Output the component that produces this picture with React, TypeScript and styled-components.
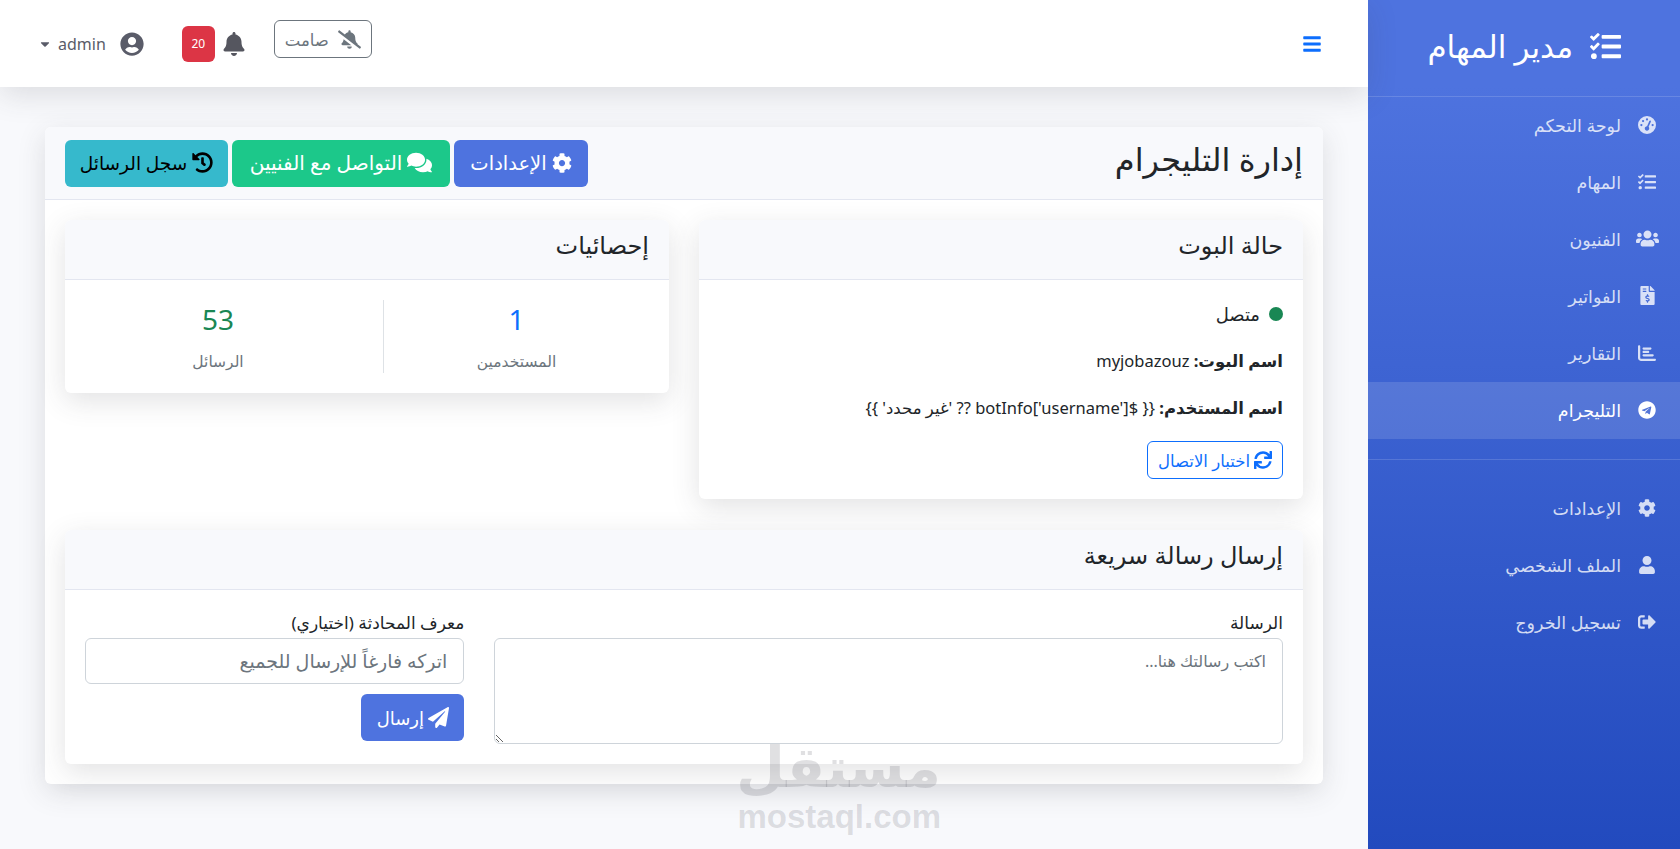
import React from "react";
import styled, { createGlobalStyle } from "styled-components";
import {
  FaBars, FaBell, FaBellSlash, FaCog, FaComments, FaFileInvoiceDollar, FaHistory,
  FaPaperPlane, FaSignOutAlt, FaSync, FaTasks, FaTelegram, FaUser, FaUserCircle, FaUsers, FaCaretDown,
} from "react-icons/fa";
import { FaChartBar, FaGaugeHigh } from "react-icons/fa6";

const Global = createGlobalStyle`
  html, body { margin: 0; padding: 0; height: 100%; overflow: hidden; }
  body { font-family: "Noto Sans", "DejaVu Sans", sans-serif; background: #f8f9fc; color: #212529; }
  * { box-sizing: border-box; }
`;

const Page = styled.div`
  position: relative;
  display: flex;
  height: 849px;
  overflow: hidden;
`;
const Sidebar = styled.aside`
  width: 312px;
  flex: none;
  background: linear-gradient(180deg, #4e73df 10%, #224abe 100%);
  color: #fff;
`;
const Brand = styled.div`
  height: 97px;
  padding: 0 59px 4px 0;
  display: flex;
  align-items: center;
  gap: 17px;
  border-bottom: 1px solid rgba(255, 255, 255, 0.15);
  font-size: 31px;
  svg { font-size: 31px; flex: none; }
`;
const Nav = styled.nav`
  display: flex;
  flex-direction: column;
`;
const NavItem = styled.a<{ $active?: boolean }>`
  height: 57px;
  display: flex;
  align-items: center;
  padding: 0 21px 2px 0;
  font-size: 17.5px;
  color: ${(p) => (p.$active ? "#fff" : "rgba(255,255,255,.8)")};
  background: ${(p) => (p.$active ? "rgba(255,255,255,.13)" : "transparent")};
`;
const NavIcon = styled.span`
  width: 24px;
  margin-left: 14px;
  display: flex;
  justify-content: center;
  font-size: 18px;
`;
const Divider = styled.hr`
  margin: 20px 0;
  border: 0;
  border-top: 1px solid rgba(255, 255, 255, 0.15);
`;
const Main = styled.main`
  flex: 1;
  min-width: 0;
`;
const Topbar = styled.header`
  height: 87px;
  padding: 0 46px 0 38px;
  background: #fff;
  display: flex;
  align-items: center;
  justify-content: space-between;
  box-shadow: 0 8px 30px rgba(58, 59, 69, 0.15);
`;
const Burger = styled.span`
  color: #0d6efd;
  font-size: 20px;
  display: flex;
`;
const TopTools = styled.div`
  display: flex;
  align-items: center;
  color: #5a5c69;
`;
const MuteButton = styled.button`
  width: 98px;
  height: 38px;
  margin: 0 0 9px 28px;
  display: flex;
  align-items: center;
  justify-content: center;
  gap: 9px;
  background: #fff;
  border: 1px solid #6c757d;
  border-radius: 6px;
  color: #6c757d;
  font: inherit;
  font-size: 16.5px;
  svg { font-size: 23px; flex: none; }
`;
const BellGroup = styled.div`
  display: flex;
  align-items: center;
  gap: 7px;
  margin-left: 38px;
  svg { font-size: 24px; color: #55565f; }
`;
const Badge = styled.span`
  width: 33px;
  height: 36px;
  border-radius: 6px;
  background: #dc3545;
  color: #fff;
  font-size: 12px;
  display: flex;
  align-items: center;
  justify-content: center;
`;
const UserMenu = styled.div`
  display: flex;
  align-items: center;
  gap: 14px;
  font-size: 16px;
  color: #5a5c69;
  svg:first-child { font-size: 24px; }
`;
const Caret = styled(FaCaretDown)`
  font-size: 14px;
  margin-right: -8px;
`;
const Content = styled.div`
  padding: 40px 45px 0;
`;
const Card = styled.section`
  background: #fff;
  border-radius: 6px;
  box-shadow: 0 8px 28px rgba(58, 59, 69, 0.15);
`;
const MainHeader = styled.div`
  height: 73px;
  padding: 0 20px;
  display: flex;
  align-items: center;
  justify-content: space-between;
  background: #f8f9fc;
  border-bottom: 1px solid #e3e6f0;
  border-radius: 6px 6px 0 0;
`;
const Title = styled.h1`
  margin: 0 0 10px;
  font-size: 32px;
  font-weight: 400;
`;
const Actions = styled.div`
  display: flex;
  gap: 4px;
`;
const ActionButton = styled.button<{ $bg: string; $fg: string; $w: number; $size: number }>`
  width: ${(p) => p.$w}px;
  height: 47px;
  padding-bottom: 2px;
  display: flex;
  align-items: center;
  justify-content: center;
  gap: 5px;
  border: 0;
  border-radius: 6px;
  background: ${(p) => p.$bg};
  color: ${(p) => p.$fg};
  font: inherit;
  font-size: ${(p) => p.$size}px;
  svg { flex: none; }
`;
const MainBody = styled.div`
  padding: 20px 20px 20px;
  display: flex;
  flex-direction: column;
  gap: 31px;
`;
const TwoCols = styled.div`
  display: grid;
  grid-template-columns: 1fr 1fr;
  gap: 30px;
  align-items: start;
`;
const CardHeader = styled.div`
  height: 60px;
  padding: 0 20px 11px;
  display: flex;
  align-items: center;
  background: #f8f9fc;
  border-bottom: 1px solid #e3e6f0;
  border-radius: 6px 6px 0 0;
`;
const CardTitle = styled.h5`
  margin: 0;
  font-size: 24px;
  font-weight: 400;
`;
const StatusBody = styled.div`
  height: 219px;
  padding: 0 20px;
  display: flex;
  flex-direction: column;
  align-items: flex-start;
`;
const StatusRow = styled.div`
  display: flex;
  align-items: center;
  gap: 9px;
  height: 24px;
  margin-top: 22px;
  font-size: 18px;
`;
const Dot = styled.span`
  width: 14px;
  height: 14px;
  border-radius: 50%;
  background: #198754;
`;
const InfoLine = styled.p<{ $top: number }>`
  margin: ${(p) => p.$top}px 0 0;
  height: 24px;
  line-height: 24px;
  font-size: 16.5px;
  white-space: nowrap;
  b { font-weight: 700; }
`;
const OutlineButton = styled.button`
  margin-top: 21px;
  width: 136px;
  height: 38px;
  display: flex;
  align-items: center;
  justify-content: center;
  gap: 4px;
  background: #fff;
  color: #0d6efd;
  border: 1px solid #0d6efd;
  border-radius: 6px;
  font: inherit;
  font-size: 16.5px;
  white-space: nowrap;
  svg { font-size: 18px; flex: none; }
`;
const StatsBody = styled.div`
  height: 113px;
  padding: 20px;
  display: grid;
  grid-template-columns: 1fr 1fr;
  gap: 32px;
`;
const Stat = styled.div<{ $line?: boolean }>`
  text-align: center;
  border-left: ${(p) => (p.$line ? "1px solid #dee2e6" : "0")};
`;
const StatValue = styled.div<{ $color: string }>`
  height: 38px;
  line-height: 38px;
  font-size: 28px;
  color: ${(p) => p.$color};
`;
const StatLabel = styled.div`
  margin-top: 12px;
  font-size: 15.5px;
  color: #6c757d;
`;
const FormBody = styled.form`
  padding: 21px 20px 20px;
  display: grid;
  grid-template-columns: repeat(12, 1fr);
  gap: 30px;
`;
const Field = styled.div<{ $span: number }>`
  grid-column: span ${(p) => p.$span};
  display: flex;
  flex-direction: column;
  align-items: flex-start;
`;
const Label = styled.label`
  height: 27px;
  line-height: 24px;
  font-size: 17px;
  white-space: nowrap;
`;
const MessageArea = styled.textarea`
  width: 100%;
  height: 106px;
  padding: 11px 16px;
  border: 1px solid #ced4da;
  border-radius: 6px;
  font: inherit;
  font-size: 16px;
  &::placeholder { color: #6c757d; }
`;
const ChatInput = styled.input`
  width: 100%;
  height: 46px;
  padding: 8px 16px;
  border: 1px solid #ced4da;
  border-radius: 6px;
  font: inherit;
  font-size: 19px;
  &::placeholder { color: #6c757d; }
`;
const SendButton = styled.button`
  margin-top: 10px;
  width: 103px;
  height: 47px;
  display: flex;
  align-items: center;
  justify-content: center;
  gap: 4px;
  border: 0;
  border-radius: 6px;
  background: #4e73df;
  color: #fff;
  font: inherit;
  font-size: 18px;
  svg { font-size: 21px; flex: none; }
`;
const Watermark = styled.div`
  position: absolute;
  left: 739px;
  top: 736px;
  width: 202px;
  text-align: center;
  pointer-events: none;
  color: rgba(70, 70, 85, 0.17);
  font-weight: 700;
  white-space: nowrap;
`;
const WatermarkAr = styled.div`
  font-family: "DejaVu Sans", sans-serif;
  font-size: 56px;
  line-height: 64px;
`;
const WatermarkEn = styled.div`
  font-family: "Liberation Sans", sans-serif;
  font-size: 33px;
  line-height: 34px;
`;

const topNav = [
  { icon: <FaGaugeHigh size={18} />, label: "لوحة التحكم" },
  { icon: <FaTasks size={18} />, label: "المهام" },
  { icon: <FaUsers size={23} />, label: "الفنيون" },
  { icon: <FaFileInvoiceDollar size={19} />, label: "الفواتير" },
  { icon: <FaChartBar size={18} />, label: "التقارير" },
];
const bottomNav = [
  { icon: <FaCog size={18} />, label: "الإعدادات" },
  { icon: <FaUser size={18} />, label: "الملف الشخصي" },
  { icon: <FaSignOutAlt size={18} />, label: "تسجيل الخروج" },
];

export default function App() {
  return (
    <Page dir="rtl">
      <Global />
      <Sidebar>
        <Brand><FaTasks /><span>مدير المهام</span></Brand>
        <Nav>
          {topNav.map((n) => (
            <NavItem key={n.label}><NavIcon>{n.icon}</NavIcon>{n.label}</NavItem>
          ))}
          <NavItem $active><NavIcon><FaTelegram size={18} /></NavIcon>التليجرام</NavItem>
          <Divider />
          {bottomNav.map((n) => (
            <NavItem key={n.label}><NavIcon>{n.icon}</NavIcon>{n.label}</NavItem>
          ))}
        </Nav>
      </Sidebar>
      <Main>
        <Topbar>
          <Burger><FaBars /></Burger>
          <TopTools>
            <MuteButton type="button"><FaBellSlash /><span>صامت</span></MuteButton>
            <BellGroup><FaBell /><Badge>20</Badge></BellGroup>
            <UserMenu><FaUserCircle /><span>admin</span><Caret /></UserMenu>
          </TopTools>
        </Topbar>
        <Content>
          <Card>
            <MainHeader>
              <Title>إدارة التليجرام</Title>
              <Actions>
                <ActionButton $bg="#4e73df" $fg="#fff" $w={134} $size={19.5}><FaCog size={20} />الإعدادات</ActionButton>
                <ActionButton $bg="#1cc88a" $fg="#fff" $w={218} $size={20}><FaComments size={25} />التواصل مع الفنيين</ActionButton>
                <ActionButton $bg="#36b9cc" $fg="#000" $w={163} $size={18.5}><FaHistory size={21} />سجل الرسائل</ActionButton>
              </Actions>
            </MainHeader>
            <MainBody>
              <TwoCols>
                <Card>
                  <CardHeader><CardTitle>حالة البوت</CardTitle></CardHeader>
                  <StatusBody>
                    <StatusRow><Dot /><span>متصل</span></StatusRow>
                    <InfoLine $top={23}><b>اسم البوت:</b> myjobazouz</InfoLine>
                    <InfoLine $top={23}><b>اسم المستخدم:</b> {"{{ $botInfo['username'] ?? 'غير محدد' }}"}</InfoLine>
                    <OutlineButton type="button"><FaSync />اختبار الاتصال</OutlineButton>
                  </StatusBody>
                </Card>
                <Card>
                  <CardHeader><CardTitle>إحصائيات</CardTitle></CardHeader>
                  <StatsBody>
                    <Stat $line><StatValue $color="#0d6efd">1</StatValue><StatLabel>المستخدمين</StatLabel></Stat>
                    <Stat><StatValue $color="#198754">53</StatValue><StatLabel>الرسائل</StatLabel></Stat>
                  </StatsBody>
                </Card>
              </TwoCols>
              <Card>
                <CardHeader><CardTitle>إرسال رسالة سريعة</CardTitle></CardHeader>
                <FormBody>
                  <Field $span={8}>
                    <Label>الرسالة</Label>
                    <MessageArea placeholder="اكتب رسالتك هنا..." />
                  </Field>
                  <Field $span={4}>
                    <Label>معرف المحادثة (اختياري)</Label>
                    <ChatInput placeholder="اتركه فارغاً للإرسال للجميع" />
                    <SendButton type="button"><FaPaperPlane />إرسال</SendButton>
                  </Field>
                </FormBody>
              </Card>
            </MainBody>
          </Card>
        </Content>
      </Main>
      <Watermark>
        <WatermarkAr>مستقل</WatermarkAr>
        <WatermarkEn>mostaql.com</WatermarkEn>
      </Watermark>
    </Page>
  );
}
